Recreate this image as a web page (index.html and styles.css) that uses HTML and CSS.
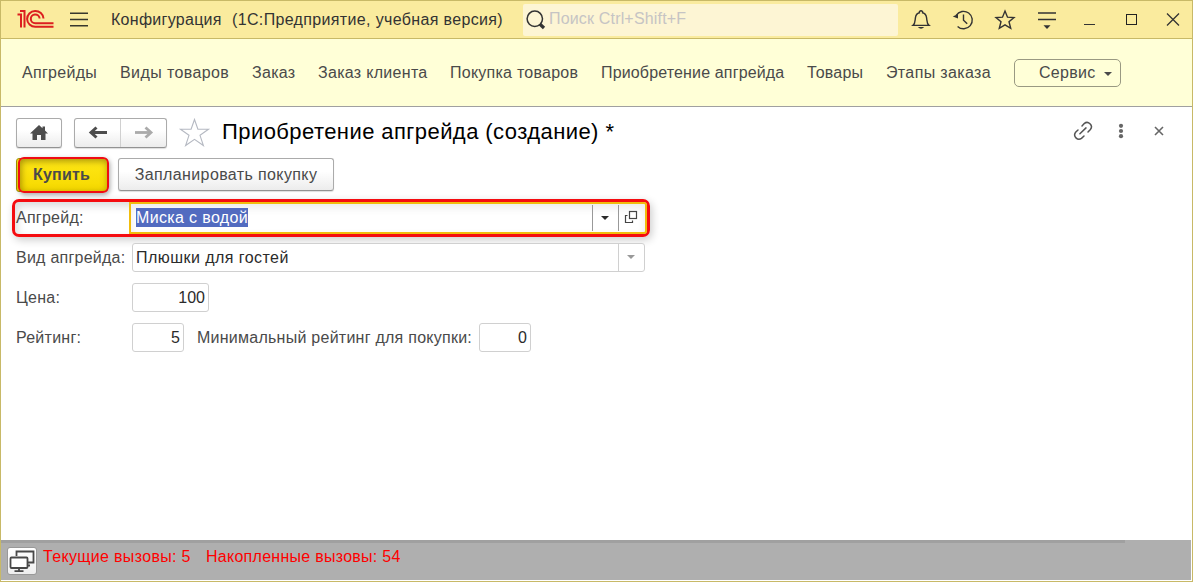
FILE: index.html
```html
<!DOCTYPE html>
<html lang="ru">
<head>
<meta charset="utf-8">
<title>Конфигурация</title>
<link rel="stylesheet" href="styles.css">
</head>
<body>
<div class="window">
  <header class="titlebar">
    <svg class="logo" width="38" height="20" viewBox="0 0 38 20" fill="none" stroke="#dc1f1f" stroke-width="2"><path d="M.5 4.5H4V17.5M3 1H7.5V17.5"/><path d="M26.5 8.5A8.2 7.9 0 1 0 18.3 16.8H36.5M22.6 8.5A4.4 4.4 0 1 0 18.3 13.2H36.5"/></svg>
    <svg class="burger" width="18" height="16" viewBox="0 0 18 16" stroke="#37372d" stroke-width="1.4"><path d="M0 1.3H18M0 7.5H18M0 13.7H18"/></svg>
    <span class="app-title">Конфигурация</span>
    <span class="app-version">(1С:Предприятие, учебная версия)</span>
    <div class="search">
      <svg width="20" height="22" viewBox="0 0 20 22" fill="none" stroke="#333"><circle cx="8.8" cy="8.8" r="7.7" stroke-width="1.5"/><path d="M13.8 14l4.2 4" stroke-width="3.2"/></svg>
      <span>Поиск Ctrl+Shift+F</span>
    </div>
    <div class="tools">
      <svg width="20" height="22" viewBox="0 0 20 22" fill="none" stroke="#333" stroke-width="1.4"><path d="M2 16.4C4.3 14.5 4 11.8 4.4 8.8C4.8 5.8 6.3 4.2 8.4 3.8V2.8Q10 .8 11.6 2.8V3.8C13.7 4.2 15.2 5.8 15.6 8.8C16 11.8 15.7 14.5 18 16.4Z"/><path d="M6.8 18H13.2Q10 21.5 6.8 18Z" fill="#333" stroke="none"/></svg>
      <svg width="20" height="22" viewBox="0 0 20 22" fill="none" stroke="#333" stroke-width="1.4"><path d="M3.2 6.4A8.7 8.7 0 1 1 4.6 17.4M10.5 5.5V11.2L14.2 14.8"/><path d="M-.2 7.6L5 5V9.6Z" fill="#333" stroke="none"/></svg>
      <svg width="20" height="22" viewBox="0 0 20 22" fill="none" stroke="#333" stroke-width="1.4"><path d="M10 2L12.5 8.2L19 8.6L14 12.8L15.7 19.3L10 15.8L4.3 19.3L6 12.8L1 8.6L7.5 8.2Z"/></svg>
      <svg width="20" height="22" viewBox="0 0 20 22" stroke="#333" stroke-width="1.5"><path d="M1 4H19M1 10.5H19"/><path d="M6.5 16.3H13.5L10 20Z" fill="#333" stroke="none"/></svg>
      <svg width="20" height="22" viewBox="0 0 20 22" stroke="#333"><path d="M5 15.5H16"/></svg>
      <svg width="20" height="22" viewBox="0 0 20 22" fill="none" stroke="#222"><rect x="5.5" y="5.5" width="10" height="10"/></svg>
      <svg width="20" height="22" viewBox="0 0 20 22" stroke="#333" stroke-width="1.3"><path d="M4 4.5L16 16.5M16 4.5L4 16.5"/></svg>
    </div>
  </header>
  <nav class="menu">
    <span>Апгрейды</span><span>Виды товаров</span><span>Заказ</span><span>Заказ клиента</span><span>Покупка товаров</span><span>Приобретение апгрейда</span><span>Товары</span><span>Этапы заказа</span>
    <button class="service">Сервис<i class="arrow"></i></button>
  </nav>
  <main class="page">
    <div class="page-head">
      <button class="btn home"><svg width="20" height="18" viewBox="0 0 20 18" fill="#4d4d4d"><path d="M10 1L1 9.5H3.5V16H8V11H12V16H16.5V9.5H19L16 6.6V2.5H13.5V4.3Z"/></svg></button>
      <div class="btn history">
        <button><svg width="20" height="14" viewBox="0 0 20 14" fill="none" stroke="#4d4d4d" stroke-width="3"><path d="M3 6.5H19"/><path d="M8.5 1.5L3 6.5L8.5 11.5"/></svg></button>
        <button><svg width="20" height="14" viewBox="0 0 20 14" fill="none" stroke="#aaa" stroke-width="2.8"><path d="M1 6.5H17"/><path d="M11.5 1.5L17 6.5L11.5 11.5"/></svg></button>
      </div>
      <svg class="favorite" width="30" height="30" viewBox="0 0 30 30" fill="#fff" stroke="#b5b9c2" stroke-width="1.1"><path d="M14.5 1.5L17.9 11.2H28.5L20 17.3L23.4 27.5L14.5 21.3L5.6 27.5L9 17.3L.5 11.2H11.1Z"/></svg>
      <h1>Приобретение апгрейда (создание) *</h1>
      <div class="page-tools">
        <svg width="22" height="22" viewBox="0 0 22 22" fill="none" stroke="#555" stroke-width="1.5" stroke-linecap="round"><path d="M10 6L12.2 3.6A4.3 4.3 0 0 1 18.4 9.5L16 12M6 10L3.6 12.3A4.3 4.3 0 0 0 9.5 18.4L12 16M7.9 13.8L14 7.9"/></svg>
        <svg width="6" height="16" viewBox="0 0 6 16" fill="#666"><circle cx="3" cy="2.8" r="2.1"/><circle cx="3" cy="8" r="2.1"/><circle cx="3" cy="13.2" r="2.1"/></svg>
        <svg width="12" height="12" viewBox="0 0 12 12" stroke="#666" stroke-width="1.6"><path d="M2 2L10 10M10 2L2 10"/></svg>
      </div>
    </div>
    <div class="commands">
      <button class="buy">Купить<i class="buy-mark"></i></button>
      <button class="btn plan">Запланировать покупку</button>
    </div>
    <div class="row picked">
      <label class="w-upgrade">Апгрейд:</label>
      <div class="field active"><span class="value"><mark>Миска с водой</mark></span><span class="drop"><i class="arrow"></i></span><span class="open"><svg width="14" height="14" viewBox="0 0 14 14" fill="none" stroke="#444" stroke-width="1.2"><rect x="5.5" y="1.5" width="7" height="7"/><path d="M3.5 5.5H1.5V12.5H8.5V10.5"/></svg></span></div>
    </div>
    <div class="row">
      <label class="w-kind">Вид апгрейда:</label>
      <div class="field kind"><span class="value">Плюшки для гостей</span><span class="drop"><i class="arrow"></i></span></div>
    </div>
    <div class="row"><label>Цена:</label><div class="field num price">100</div></div>
    <div class="row"><label>Рейтинг:</label><div class="field num rating">5</div><label class="min">Минимальный рейтинг для покупки:</label><div class="field num rating">0</div></div>
  </main>
  <footer class="status">
    <div class="progress"></div>
    <div class="status-line">
      <span class="monitor"><svg width="28" height="26" viewBox="0 0 28 26" fill="none" stroke="#484848" stroke-width="1.8"><path d="M8.5 8V3.5H25.5V14.5H20M20 17.5H22"/><rect x="2.5" y="9.5" width="17" height="10.5" rx="1" fill="#fff"/><path d="M11 20V23M6.5 23.2H15.5"/></svg></span>
      <span class="calls">Текущие вызовы: 5</span><span class="total">Накопленные вызовы: 54</span>
    </div>
  </footer>
</div>
</body>
</html>
```
FILE: styles.css
```css
* { box-sizing: border-box; }
body { margin: 0; font: 16px/20px "Liberation Sans", Arial, sans-serif; color: #4a4a4a; }
button { font: inherit; color: inherit; padding: 0; margin: 0; border: 0; background: none; letter-spacing: inherit; }
svg { display: block; flex: none; overflow: visible; }
span, label, h1, button { white-space: nowrap; }
.window { width: 1193px; height: 582px; border: 1px solid #c8b967; background: #fff; display: flex; flex-direction: column; overflow: hidden; }
.titlebar { height: 38px; flex: none; display: flex; align-items: center; background: #faeb9e; border-bottom: 1px solid #c8b967; color: #333; }
.logo { margin-left: 16px; margin-top: 1px; }
.burger { margin-left: 15px; margin-top: 1px; }
.app-title { margin-left: 23px; width: 121px; letter-spacing: .28px; }
.app-version { width: 291px; letter-spacing: .35px; }
.search { width: 375px; height: 32px; background: #fdf5d4; display: flex; align-items: center; color: #c6c4c4; border-radius: 2px; }
.search svg { margin-left: 3px; margin-top: 2px; }
.search span { margin-left: 3px; margin-top: -2px; letter-spacing: .17px; }
.tools { display: flex; gap: 22px; margin-left: 13px; }
.menu { height: 68px; flex: none; display: flex; align-items: center; gap: 23px; padding-left: 21px; background: #ffffd7; border-bottom: 1px solid #a0a0a0; letter-spacing: .3px; }
.menu span:nth-child(1) { width: 75px; }
.menu span:nth-child(2) { width: 109px; letter-spacing: .4px; }
.menu span:nth-child(3) { width: 43px; }
.menu span:nth-child(4) { width: 109px; }
.menu span:nth-child(5) { width: 128px; letter-spacing: .25px; }
.menu span:nth-child(6) { width: 183px; letter-spacing: .15px; }
.menu span:nth-child(7) { width: 56px; letter-spacing: .2px; }
.menu span:nth-child(8) { width: 105px; letter-spacing: .36px; }
.service { width: 107px; height: 28px; border: 1px solid #999982; border-radius: 5px; display: flex; align-items: center; padding-left: 24px; }
.arrow { width: 0; height: 0; border: 4px solid transparent; border-top: 4px solid currentColor; border-bottom: 0; }
.service .arrow { margin: 3px 0 0 8px; }
.page { flex: 1; padding: 10px 0 0 15px; }
.page-head { height: 31px; display: flex; align-items: center; }
.btn { border: 1px solid #ababab; border-bottom-color: #929292; border-radius: 3px; background: linear-gradient(#fff 40%, #ececec); box-shadow: 0 1px 1px #ddd; display: flex; align-items: center; justify-content: center; }
.home { width: 46px; height: 30px; }
.history { width: 93px; height: 30px; margin-left: 12px; align-items: stretch; }
.history button { flex: 1; display: flex; align-items: center; justify-content: center; }
.history button + button { border-left: 1px solid #d0d0d0; }
.favorite { margin-left: 13px; }
h1 { margin: -2px 0 0 12px; font-size: 22px; line-height: 28px; font-weight: 400; letter-spacing: .43px; color: #000; }
.page-tools { margin: -4px 27px 0 auto; display: flex; align-items: center; }
.page-tools svg + svg { margin-left: 24px; }
.page-tools svg + svg + svg { margin-left: 29px; }
.commands { display: flex; gap: 10px; padding-top: 10px; }
.buy { position: relative; width: 92px; height: 34px; padding-right: 1px; border: 1px solid #a39100; border-radius: 3px; background: linear-gradient(#ffe816, #f6d900); font-weight: 700; letter-spacing: .2px; }
.buy-mark { position: absolute; inset: -2px -2px -2px 1px; border: 2px solid #f00c14; border-radius: 6px; box-shadow: 1px 2px 5px rgba(0,0,0,.35), inset 1px 2px 7px rgba(90,70,0,.55); }
.plan { width: 216px; height: 33px; letter-spacing: .38px; }
.row { display: flex; align-items: center; height: 29px; margin-top: 11px; }
.row label { width: 116px; letter-spacing: .25px; }
.field { height: 29px; border: 1px solid #d0d0d0; border-radius: 3px; display: flex; align-items: stretch; color: #2b2b2b; background: #fff; }
.value { flex: 1; padding-left: 3px; display: flex; align-items: center; letter-spacing: .45px; }
.drop, .open { width: 26px; border-left: 1px solid #d0d0d0; display: flex; align-items: center; justify-content: center; }
.drop { padding: 0 2px 1px 0; }
.picked { width: 638px; height: 38px; margin: 7px 0 0 -4px; border: 3px solid #f50c10; border-radius: 7px; padding-left: 1px; box-shadow: 2px 3px 8px rgba(0,0,0,.2), inset 2px 4px 8px rgba(0,0,0,.15); }
.picked .w-upgrade { width: 113px; margin-top: -1px; }
.active { flex: 1; height: 32px; padding-right: 1px; border: 2px solid #f1bd0d; border-radius: 0 3px 3px 0; box-shadow: inset 0 4px 8px rgba(0,0,0,.08); }
.active .drop, .active .open { margin: 1px 0; border-color: #999; }
.active .open { padding: 0 1px 2px 0; }
.active .value { padding: 0 0 2px 5px; letter-spacing: .35px; }
mark { background: #526bc0; color: #fff; height: 19px; line-height: 20px; }
.picked + .row { margin-top: 6px; }
.kind { width: 513px; }
.kind .drop { color: #999; }
.num { justify-content: flex-end; align-items: center; padding-right: 3px; }
.price { width: 77px; }
.rating { width: 52px; }
.row .min { width: 282px; margin-left: 13px; }
.status { height: 41px; flex: none; background: #afafaf; border-bottom: 1px solid #fff; margin-right: 1px; }
.progress { width: 1124px; height: 3px; background: #a0a0a0; }
.status-line { display: flex; color: #f00; }
.monitor { width: 30px; height: 28px; margin: 4px 0 0 6px; border: 1px solid #999; border-radius: 3px; background: linear-gradient(#fff, #eee); }
.calls { margin: 4px 0 0 6px; width: 163px; letter-spacing: .33px; }
.total { margin-top: 4px; letter-spacing: .27px; }
```
